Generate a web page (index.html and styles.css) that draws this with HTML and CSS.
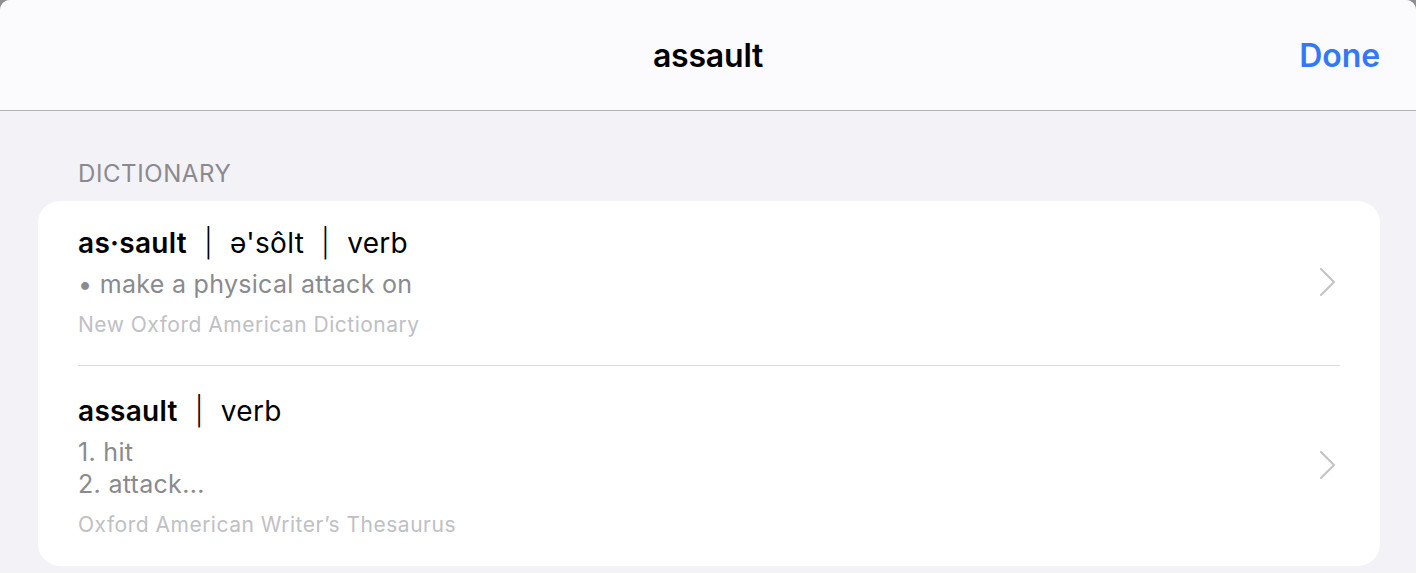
FILE: index.html
```html
<!DOCTYPE html>
<html lang="en">
<head>
    <meta charset="UTF-8" />
    <meta name="viewport" content="width=device-width, initial-scale=1.0" />
    <title>assault</title>
    <link rel="stylesheet" href="styles.css">
</head>
<body>
    <div class="sheet">
        <div class="nav-bar">
            <h1 class="nav-title">assault</h1>
            <button class="done-btn">Done</button>
        </div>

        <div class="content">
            <h2 class="section-label">DICTIONARY</h2>

            <div class="card">
                <!-- Dictionary entry -->
                <div class="entry">
                    <div class="entry-text">
                        <p class="headword"><b>as·sault</b><span class="bar">|</span>ə'sôlt<span class="bar">|</span>verb</p>
                        <p class="sense">• make a physical attack on</p>
                        <p class="source">New Oxford American Dictionary</p>
                    </div>
                    <svg class="chevron" width="18" height="30" viewBox="0 0 18 30">
                        <path d="M2 2 L15 15 L2 28" fill="none" stroke="#c4c4c7" stroke-width="2.2" stroke-linecap="round" stroke-linejoin="round"/>
                    </svg>
                </div>

                <!-- Thesaurus entry -->
                <div class="entry">
                    <div class="entry-text">
                        <p class="headword"><b>assault</b><span class="bar">|</span>verb</p>
                        <p class="sense">1. hit<br>2. attack...</p>
                        <p class="source">Oxford American Writer’s Thesaurus</p>
                    </div>
                    <svg class="chevron" width="18" height="30" viewBox="0 0 18 30">
                        <path d="M2 2 L15 15 L2 28" fill="none" stroke="#c4c4c7" stroke-width="2.2" stroke-linecap="round" stroke-linejoin="round"/>
                    </svg>
                </div>
            </div>
        </div>
    </div>
</body>
</html>
```

FILE: styles.css
```css
html, body {
    margin: 0;
    height: 100%;
}

body {
    font-family: Inter, "Noto Sans", sans-serif;
    background-color: #8e8e93;
    overflow: hidden;
}

p, h1, h2 {
    margin: 0;
}

.sheet {
    height: 100%;
    background-color: #f2f2f7;
    border-radius: 10px 10px 0 0;
    overflow: hidden;
}

/* Top bar */
.nav-bar {
    height: 110px;
    background-color: #fbfbfd;
    border-bottom: 1px solid #b3b3b6;
    position: relative;
    display: flex;
    align-items: center;
    justify-content: center;
}

.nav-title {
    font-size: 32px;
    font-weight: 600;
    color: #000;
    letter-spacing: -0.2px;
}

.done-btn {
    position: absolute;
    right: 36px;
    top: 36px;
    font-family: inherit;
    font-size: 32px;
    font-weight: 600;
    color: #3478f6;
    background: none;
    border: none;
    padding: 0;
    letter-spacing: -0.1px;
}

/* Section */
.content {
    padding: 48px 36px 0 38px;
}

.section-label {
    font-size: 24px;
    font-weight: 400;
    color: #8a8a8e;
    padding-left: 40px;
    margin-bottom: 12px;
    line-height: 30px;
    letter-spacing: 0.6px;
}

.card {
    background-color: #fff;
    border-radius: 22px;
    padding-left: 40px;
}

.entry {
    display: flex;
    align-items: center;
    margin-right: 40px;
    padding-right: 3px;
    border-bottom: 1px solid #dcdce0;
}

.entry:last-child {
    border-bottom: none;
}

.entry-text {
    flex: 1;
    padding: 25px 0 27px;
}

.entry:last-child .entry-text {
    padding: 28px 0 28px;
}

.headword {
    font-size: 28px;
    line-height: 34px;
    color: #000;
    letter-spacing: 0.3px;
}

.headword b {
    font-weight: 600;
}

.bar {
    margin: 0 17px;
    font-weight: 300;
}

.sense {
    font-size: 25px;
    line-height: 32px;
    color: #8a8a8e;
    margin-top: 8px;
    letter-spacing: 0.3px;
}

.source {
    font-size: 21px;
    line-height: 26px;
    color: #c0c0c4;
    margin-top: 12px;
    letter-spacing: 0.5px;
}

.chevron {
    flex: none;
    margin-top: -3px;
}
```
